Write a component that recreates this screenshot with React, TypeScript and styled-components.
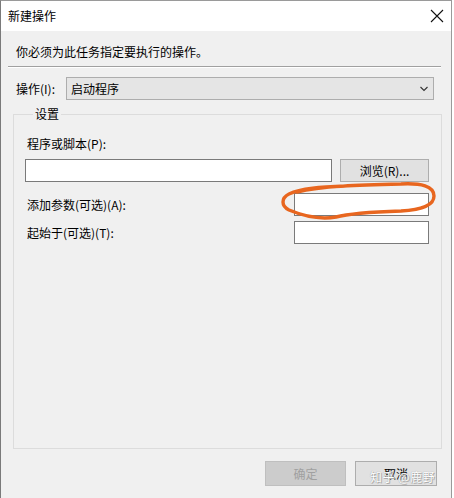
import React from "react";
import styled, { createGlobalStyle } from "styled-components";

const Global = createGlobalStyle`
  html, body { margin: 0; padding: 0; background: #ffffff; }
  body { font-family: "Microsoft YaHei UI", "Noto Sans CJK SC", "Noto Sans", sans-serif; font-size: 12px; color: #000; }
  * { box-sizing: border-box; }
`;

const Window = styled.div`
  position: relative;
  width: 452px;
  height: 498px;
  border-left: 1px solid #7a7a7a;
  border-right: 1px solid #9a9a9a;
  border-top: 1px solid #9a9a9a;
  display: flex;
  flex-direction: column;
  overflow: hidden;
`;

const TitleBar = styled.div`
  height: 30px;
  background: #ffffff;
  display: flex;
  align-items: center;
  justify-content: space-between;
  padding: 0 6px 0 7px;
  flex-shrink: 0;
`;

const Title = styled.span`
  font-size: 12px;
  line-height: 16px;
`;

const CloseButton = styled.div`
  width: 16px;
  height: 16px;
  display: flex;
  align-items: center;
  justify-content: center;
`;

const Body = styled.div`
  flex: 1;
  background: #f0f0f0;
  display: flex;
  flex-direction: column;
`;

const Instruction = styled.div`
  margin: 13px 0 0 15px;
  line-height: 16px;
`;

const Separator = styled.div`
  margin: 6px 0 0 7px;
  width: 433px;
  border-top: 1px solid #a0a0a0;
  border-bottom: 1px solid #ffffff;
`;

const ActionRow = styled.div`
  margin: 9px 0 0 15px;
  display: flex;
  align-items: center;
`;

const Label = styled.span`
  line-height: 16px;
  white-space: nowrap;
`;

const Combo = styled.div`
  margin-left: 11px;
  width: 368px;
  height: 23px;
  background: #e5e5e5;
  border: 1px solid #adadad;
  display: flex;
  align-items: center;
  justify-content: space-between;
  padding: 0 4px 0 4px;
`;

const Group = styled.fieldset`
  margin: 6px 0 0 12px;
  width: 429px;
  height: 343px;
  border: 1px solid #dcdcdc;
  padding: 0 12px 0 11px;
  display: flex;
  flex-direction: column;
`;

const Legend = styled.legend`
  padding: 0 2px;
  margin-left: 8px;
  line-height: 16px;
`;

const FieldLabel = styled.div`
  margin: 14px 0 0 2px;
  line-height: 16px;
`;

const PathRow = styled.div`
  margin-top: 7px;
  display: flex;
  align-items: flex-start;
  gap: 8px;
`;

const TextBox = styled.div<{ $w: number }>`
  width: ${(p) => p.$w}px;
  height: 23px;
  background: #ffffff;
  border: 1px solid #7a7a7a;
`;

const Button = styled.div<{ $w: number; $disabled?: boolean }>`
  width: ${(p) => p.$w}px;
  height: 23px;
  background: ${(p) => (p.$disabled ? "#cccccc" : "#e1e1e1")};
  border: 1px solid ${(p) => (p.$disabled ? "#bfbfbf" : "#adadad")};
  color: ${(p) => (p.$disabled ? "#a0a0a0" : "#000")};
  display: flex;
  align-items: center;
  justify-content: center;
  line-height: 16px;
`;

const OptionRow = styled.div<{ $top: number }>`
  margin-top: ${(p) => p.$top}px;
  display: flex;
  align-items: center;
  justify-content: space-between;
  padding-left: 2px;
`;

const Footer = styled.div`
  margin: 12px 14px 0 0;
  display: flex;
  justify-content: flex-end;
  gap: 9px;
`;

const FooterButton = styled(Button)`
  height: 25px;
`;

const Scribble = styled.svg`
  position: absolute;
  left: 0;
  top: 0;
  pointer-events: none;
`;

const Watermark = styled.div`
  position: absolute;
  left: 369px;
  top: 468px;
  font-size: 12px;
  line-height: 16px;
  color: #ffffff;
  letter-spacing: 0.5px;
  text-shadow: 0 0 1px #8a8a8a, 1px 1px 0 #b0b0b0;
  pointer-events: none;
`;

export default function App() {
  return (
    <>
      <Global />
      <Window>
        <TitleBar>
          <Title>新建操作</Title>
          <CloseButton>
            <svg width="14" height="14" viewBox="0 0 14 14">
              <path d="M1 1 L13 13 M13 1 L1 13" stroke="#111" strokeWidth="1.1" />
            </svg>
          </CloseButton>
        </TitleBar>
        <Body>
          <Instruction>你必须为此任务指定要执行的操作。</Instruction>
          <Separator />
          <ActionRow>
            <Label>操作(I):</Label>
            <Combo>
              <Label>启动程序</Label>
              <svg width="10" height="8" viewBox="0 0 10 8">
                <path d="M1.5 2 L5 5.5 L8.5 2" stroke="#333" strokeWidth="1.1" fill="none" />
              </svg>
            </Combo>
          </ActionRow>
          <Group>
            <Legend>设置</Legend>
            <FieldLabel>程序或脚本(P):</FieldLabel>
            <PathRow>
              <TextBox $w={307} />
              <Button $w={89}>浏览(R)...</Button>
            </PathRow>
            <OptionRow $top={11}>
              <Label>添加参数(可选)(A):</Label>
              <TextBox $w={135} />
            </OptionRow>
            <OptionRow $top={5}>
              <Label>起始于(可选)(T):</Label>
              <TextBox $w={135} />
            </OptionRow>
          </Group>
          <Footer>
            <FooterButton $w={81} $disabled>确定</FooterButton>
            <FooterButton $w={82}>取消</FooterButton>
          </Footer>
        </Body>
        <Scribble width="452" height="498" viewBox="0 0 452 498">
          <path
            d="M296 191 C320 185 360 184 400 183 C420 182 433 185 433 195 C433 205 418 209 400 210 C370 211 350 212 335 216 C318 219 300 214 288 209 C280 205 280 197 288 193 C300 187 320 186 345 185"
            stroke="#e8661f"
            strokeWidth="3.4"
            fill="none"
            strokeLinecap="round"
          />
        </Scribble>
        <Watermark>知乎 @鹿野</Watermark>
      </Window>
    </>
  );
}
